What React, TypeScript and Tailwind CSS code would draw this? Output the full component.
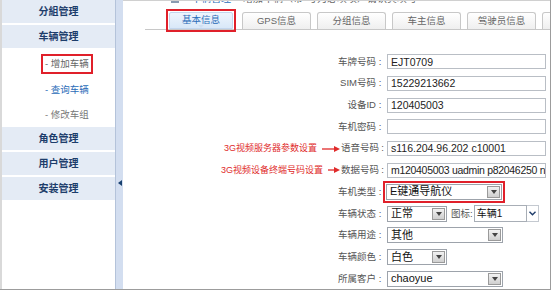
import React from 'react';

const FONT = { fontFamily: '"Liberation Sans", "Noto Sans CJK SC", sans-serif' };

const MENU_TOP = ['分組管理', '车辆管理'];
const MENU_BOTTOM = ['角色管理', '用户管理', '安装管理'];

const TABS = ['GPS信息', '分组信息', '车主信息', '驾驶员信息', '车辆'];

// dropdown arrow button used by the old-style selects
const DropBtn: React.FC = () => (
  <div className="w-[13px] h-[12px] my-auto mr-[1px] border border-[#9a9a9a] bg-gradient-to-b from-[#f2f2f2] to-[#cfcfcf] flex items-center justify-center">
    <div className="w-0 h-0 border-l-[3px] border-r-[3px] border-t-[4px] border-l-transparent border-r-transparent border-t-[#444]" />
  </div>
);

const Select: React.FC<{ value: string; w: string }> = ({ value, w }) => (
  <div className={`${w} h-[16px] border border-[#9da3ab] bg-white flex items-center`}>
    <span className="flex-1 pl-[3px] text-[11px] text-[#111] leading-none">{value}</span>
    <DropBtn />
  </div>
);

const Input: React.FC<{ value?: string; tight?: boolean }> = ({ value, tight }) => (
  <div className={`w-[159px] h-[15px] border border-[#b9bec5] bg-white flex items-center pl-[3px] overflow-hidden whitespace-nowrap text-[10.5px] text-[#222] leading-none ${tight ? 'tracking-[-0.3px]' : ''}`}>
    {value}
  </div>
);

const Arrow: React.FC<{ w: number }> = ({ w }) => (
  <svg width={w} height="8" viewBox={`0 0 ${w} 8`} className="shrink-0">
    <line x1="0" y1="4" x2={w - 5} y2="4" stroke="#e02b2b" strokeWidth="1.3" />
    <polygon points={`${w - 6},1 ${w},4 ${w - 6},7`} fill="#e02b2b" />
  </svg>
);

const Row: React.FC<{ label: string; note?: string; arrow?: number; children: React.ReactNode }> = ({ label, note, arrow, children }) => (
  <div className="h-[21.7px] flex items-center">
    <div className="w-[261px] flex items-center justify-end text-[9.5px] text-[#555] whitespace-nowrap">
      {note && (
        <>
          <span className="text-[#e02b2b] text-[9px] mr-[5px]">{note}</span>
          <Arrow w={arrow ?? 18} />
        </>
      )}
      <span className="ml-[1px]">{label}</span>
      <span className={note ? 'w-[5px] text-right' : 'w-[8px] text-center'}>:</span>
    </div>
    <div className="ml-[3px] flex items-center">{children}</div>
  </div>
);

export default function App() {
  return (
    <div className="w-[554px] h-[292px] bg-white overflow-hidden" style={FONT}>
      <div className="w-[551px] h-[290px] flex border-r border-b border-[#9c9c9c] overflow-hidden">
        {/* left menu */}
        <div className="w-[115px] shrink-0 border-l-[2px] border-[#d9d9d9] flex flex-col">
          {MENU_TOP.map((m) => (
            <div key={m} className="h-[25px] shrink-0 bg-[#e4ebf5] border-b-[2px] border-white flex items-center justify-center text-[10px] font-bold text-[#1d3d6b]">
              {m}
            </div>
          ))}
          <div className="h-[77px] shrink-0 flex flex-col items-start pl-[39px] text-[9.5px]">
            <div className="mt-[4px] h-[20px] px-[2px] border-[2px] border-[#e0202a] flex items-center text-[#666]">- 增加车辆</div>
            <div className="mt-[6px] h-[20px] pl-[4px] flex items-center text-[#2a6cb8]">- 查询车辆</div>
            <div className="mt-[5px] h-[20px] pl-[4px] flex items-center text-[#777]">- 修改车组</div>
          </div>
          {MENU_BOTTOM.map((m) => (
            <div key={m} className="h-[25px] shrink-0 bg-[#e4ebf5] border-b-[2px] border-white flex items-center justify-center text-[10px] font-bold text-[#1d3d6b]">
              {m}
            </div>
          ))}
        </div>

        {/* splitter */}
        <div className="w-[8px] shrink-0 bg-[#d3def0] border-l border-[#b4c3da] flex flex-col items-center pt-[180px]">
          <div className="w-0 h-0 border-t-[3px] border-b-[3px] border-r-[4px] border-t-transparent border-b-transparent border-r-[#18406f]" />
        </div>

        {/* content */}
        <div className="flex-1 flex flex-col min-w-0">
          <div className="h-[7px] overflow-hidden shrink-0 border-t border-[#d0d0d0]">
            <div className="mt-[-9px] ml-[48px] flex items-center gap-[12px] text-[10px] leading-[14px] whitespace-nowrap">
              <span className="w-[8px] h-[8px] bg-[#8a9bb0]" />
              <span className="text-[#2a6cb8]">车辆管理</span>
              <span className="text-[#666]">增加车辆（带*号为必填项）请认真填写</span>
            </div>
          </div>

          {/* tabs */}
          <div className="mt-[6px] ml-[22px] h-[17px] border-b border-[#c8c8c8] flex items-end gap-[6px] pl-[26px] shrink-0">
            <div className="relative -ml-[5px] h-[23px] w-[70px] -mb-[3px] border-[2px] border-[#e0202a] p-[1px] shrink-0">
              <div className="h-full bg-gradient-to-b from-[#eef5fd] to-[#d9e8f8] border border-[#c3d6ee] rounded-t-[2px] flex items-center justify-center text-[9.5px] text-[#2a6cb8]">
                基本信息
              </div>
              <div className="absolute left-1/2 -translate-x-1/2 bottom-[2px] w-0 h-0 border-l-[3px] border-r-[3px] border-t-[3px] border-l-transparent border-r-transparent border-t-[#cfdff2]" />
            </div>
            {TABS.map((t) => (
              <div key={t} className="h-[17px] w-[69px] shrink-0 border border-b-0 border-[#c8c8c8] rounded-t-[3px] bg-gradient-to-b from-white to-[#efefef] flex items-center justify-center text-[9.5px] text-[#666] whitespace-nowrap overflow-hidden">
                {t}
              </div>
            ))}
          </div>

          {/* form */}
          <div className="mt-[21px] flex flex-col">
            <Row label="车牌号码"><Input value="EJT0709" /></Row>
            <Row label="SIM号码"><Input value="15229213662" /></Row>
            <Row label="设备ID"><Input value="120405003" /></Row>
            <Row label="车机密码"><Input /></Row>
            <Row label="语音号码" note="3G视频服务器参数设置" arrow={18}><Input value="s116.204.96.202 c10001" /></Row>
            <Row label="数据号码" note="3G视频设备终端号码设置" arrow={12}><Input value="m120405003 uadmin p82046250 n0" tight /></Row>
            <Row label="车机类型">
              <div className="-ml-[4px] border-[2px] border-[#e0202a] p-[1px]">
                <Select value="E键通导航仪" w="w-[116px]" />
              </div>
            </Row>
            <Row label="车辆状态">
              <Select value="正常" w="w-[60px]" />
              <span className="ml-[4px] text-[9.5px] text-[#555]">图标:</span>
              <div className="ml-[1px] w-[53px] h-[17px] border border-[#a8aeb6] bg-white flex items-center pl-[2px] text-[10px] text-[#111]">车辆1</div>
              <div className="w-[12px] h-[17px] border border-l-0 border-[#c4c9d0] bg-white flex items-center justify-center">
                <svg width="7" height="5" viewBox="0 0 7 5"><path d="M0.5 0.8 L3.5 3.8 L6.5 0.8" fill="none" stroke="#1e3c6a" strokeWidth="1.4" /></svg>
              </div>
            </Row>
            <Row label="车辆用途"><Select value="其他" w="w-[116px]" /></Row>
            <Row label="车辆颜色"><Select value="白色" w="w-[60px]" /></Row>
            <Row label="所属客户"><Select value="chaoyue" w="w-[116px]" /></Row>
          </div>
        </div>
      </div>
    </div>
  );
}
